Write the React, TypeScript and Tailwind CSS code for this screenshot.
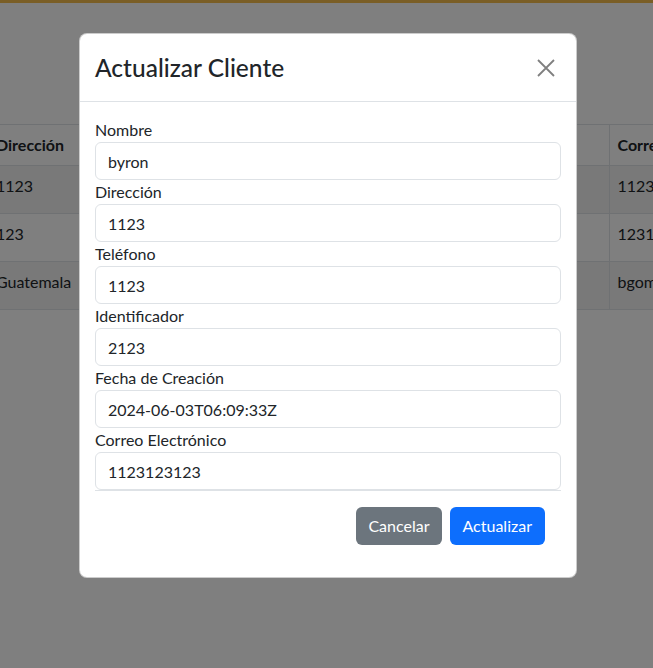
import React from "react"

const fields = [
  { label: "Nombre", value: "byron" },
  { label: "Dirección", value: "1123" },
  { label: "Teléfono", value: "1123" },
  { label: "Identificador", value: "2123" },
  { label: "Fecha de Creación", value: "2024-06-03T06:09:33Z" },
  { label: "Correo Electrónico", value: "1123123123" },
]

const rows = [
  { dir: "1123", tel: "1123", id: "2123", mail: "1123123123" },
  { dir: "123", tel: "123", id: "123", mail: "1231231231" },
  { dir: "Guatemala", tel: "55555555", id: "3", mail: "bgomez@gmail.com" },
]

const font = { fontFamily: "Lato, 'Noto Sans', sans-serif" }

export default function App() {
  return (
    <div className="relative w-full h-[668px] overflow-hidden bg-white text-[#212529]" style={font}>
      <div className="h-[3px] bg-[#f5bd4c]" />

      <div className="pt-[121px]">
        <table className="table-fixed border-collapse ml-[-12px] w-[822px] text-base">
          <colgroup>
            <col className="w-[162px]" />
            <col className="w-[230px]" />
            <col className="w-[229px]" />
            <col className="w-[201px]" />
          </colgroup>
          <thead>
            <tr className="h-[41px] border-y border-[#dee2e6]">
              <th className="px-2 py-2 text-left font-bold align-top">Dirección</th>
              <th className="px-2 py-2 text-left font-bold align-top border-l border-[#dee2e6]">Teléfono</th>
              <th className="px-2 py-2 text-left font-bold align-top border-l border-[#dee2e6]">Identificador</th>
              <th className="px-2 py-2 text-left font-bold align-top border-l border-[#dee2e6]">Correo</th>
            </tr>
          </thead>
          <tbody>
            {rows.map((r, i) => (
              <tr key={i} className={`h-[48px] border-b border-[#dee2e6] ${i % 2 === 0 ? "bg-[#f2f2f2]" : "bg-white"}`}>
                <td className="px-2 py-2 align-top">{r.dir}</td>
                <td className="px-2 py-2 align-top border-l border-[#dee2e6]">{r.tel}</td>
                <td className="px-2 py-2 align-top border-l border-[#dee2e6]">{r.id}</td>
                <td className="px-2 py-2 align-top border-l border-[#dee2e6] whitespace-nowrap overflow-hidden">{r.mail}</td>
              </tr>
            ))}
          </tbody>
        </table>
      </div>

      {/* backdrop */}
      <div className="absolute inset-0 bg-black/50" />

      {/* modal */}
      <div className="absolute left-[79px] top-[33px] w-[498px] bg-white border border-black/20 rounded-lg">
        <div className="flex items-center justify-between pl-[15px] pr-[14px] pt-4 pb-[15px] border-b border-[#dee2e6]">
          <h5 className="text-[24.5px] leading-[36px] font-medium">Actualizar Cliente</h5>
          <button className="w-8 h-8 flex items-center justify-center text-black/50" aria-label="Close">
            <svg width="18" height="18" viewBox="0 0 18 18" fill="none" stroke="currentColor" strokeWidth="1.8">
              <path d="M1 1L17 17M17 1L1 17" />
            </svg>
          </button>
        </div>
        <div className="px-[15px] pt-4 pb-8">
          <div className="border-b border-[#dee2e6]">
            {fields.map((f) => (
              <div key={f.label}>
                <label className="block leading-6">{f.label}</label>
                <input
                  readOnly
                  value={f.value}
                  className="block w-full h-[38px] px-3 border border-[#dee2e6] rounded-md text-base text-[#212529] outline-none"
                  style={font}
                />
              </div>
            ))}
          </div>
          <div className="flex justify-end gap-2 mt-4 pr-[16px]">
            <button className="h-[38px] px-3 rounded-md bg-[#6c757d] text-white text-base">Cancelar</button>
            <button className="h-[38px] px-[13px] rounded-md bg-[#0d6efd] text-white text-base">Actualizar</button>
          </div>
        </div>
      </div>
    </div>
  )
}
